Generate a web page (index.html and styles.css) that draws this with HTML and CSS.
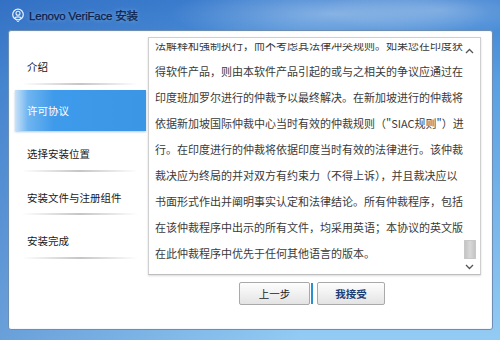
FILE: index.html
```html
<!DOCTYPE html>
<html lang="zh-CN">
<head>
<meta charset="utf-8">
<title>Lenovo VeriFace 安装</title>
<link rel="stylesheet" href="styles.css">
</head>
<body>
<div class="window">
  <div class="titlebar">
    <svg class="logo" width="12" height="14" viewBox="0 0 12 14">
      <circle cx="6" cy="6.5" r="5.3" fill="none" stroke="#e8f2ff" stroke-width="1.2"/>
      <circle cx="6" cy="5.2" r="2" fill="none" stroke="#e8f2ff" stroke-width="1.1"/>
      <path d="M2.6 10.4 C3.4 8.4 8.6 8.4 9.4 10.4" fill="none" stroke="#e8f2ff" stroke-width="1.1"/>
      <path d="M4.5 12.6 L6 13.8 L7.5 12.6" fill="none" stroke="#e8f2ff" stroke-width="0.9"/>
    </svg>
    <span class="title">Lenovo VeriFace 安装</span>
  </div>
  <div class="panel">
    <ul class="nav">
      <li class="nav-item">介绍</li>
      <li class="nav-item active">许可协议</li>
      <li class="nav-item">选择安装位置</li>
      <li class="nav-item">安装文件与注册组件</li>
      <li class="nav-item">安装完成</li>
    </ul>
    <div class="main">
      <div class="license">
        <div class="scroll">
          <div class="text">
            <div class="line">法解释和强制执行，而不考虑其法律冲突规则。如果您在印度获</div>
            <div class="line">得软件产品，则由本软件产品引起的或与之相关的争议应通过在</div>
            <div class="line">印度班加罗尔进行的仲裁予以最终解决。在新加坡进行的仲裁将</div>
            <div class="line">依据新加坡国际仲裁中心当时有效的仲裁规则（"SIAC规则"）进</div>
            <div class="line">行。在印度进行的仲裁将依据印度当时有效的法律进行。该仲裁</div>
            <div class="line">裁决应为终局的并对双方有约束力（不得上诉），并且裁决应以</div>
            <div class="line">书面形式作出并阐明事实认定和法律结论。所有仲裁程序，包括</div>
            <div class="line">在该仲裁程序中出示的所有文件，均采用英语；本协议的英文版</div>
            <div class="line">在此仲裁程序中优先于任何其他语言的版本。</div>
          </div>
          <div class="scrollbar">
            <svg class="arrow" width="9" height="6" viewBox="0 0 9 6"><path d="M1 5 L4.5 1.5 L8 5" fill="none" stroke="#555" stroke-width="1.3"/></svg>
            <div class="track"><div class="thumb"></div></div>
            <svg class="arrow" width="9" height="6" viewBox="0 0 9 6"><path d="M1 1 L4.5 4.5 L8 1" fill="none" stroke="#555" stroke-width="1.3"/></svg>
          </div>
        </div>
      </div>
      <div class="buttons">
        <button class="btn">上一步</button>
        <span class="focus-bar"></span>
        <button class="btn accept">我接受</button>
      </div>
    </div>
  </div>
</div>
</body>
</html>
```
FILE: styles.css
```css
html, body {
  margin: 0;
  padding: 0;
}
body {
  width: 500px;
  height: 340px;
  overflow: hidden;
  font-family: "Noto Sans CJK SC", "Liberation Sans", sans-serif;
}
.window {
  width: 500px;
  height: 340px;
  box-sizing: border-box;
  background:
    radial-gradient(ellipse 160px 30px at 330px 14px, rgba(255,255,255,0.35), rgba(255,255,255,0) 100%),
    radial-gradient(ellipse 120px 25px at 440px 10px, rgba(255,255,255,0.25), rgba(255,255,255,0) 100%),
    linear-gradient(90deg, rgba(30,80,170,0.35) 0, rgba(30,80,170,0) 60%),
    linear-gradient(180deg, #3f82d2 0, #5aa0e2 25%, #7db9ec 70%, #93cbf3 100%);
  padding: 0 7px 10px 8px;
  display: flex;
  flex-direction: column;
}
.titlebar {
  height: 30px;
  display: flex;
  align-items: center;
  padding-left: 4px;
  gap: 5px;
}
.logo {
  display: block;
  margin-top: -1px;
}
.title {
  font-family: "Liberation Sans", "Noto Sans CJK SC", sans-serif;
  font-size: 11.5px;
  color: #0c1f4c;
  letter-spacing: -0.2px;
  -webkit-text-stroke: 0.25px #0c1f4c;
  text-shadow: 0 0 4px rgba(255,255,255,0.45);
}
.panel {
  flex: 1;
  background: #fff;
  border: 1px solid #6d8db2;
  border-radius: 3px;
  display: flex;
  box-shadow: inset 0 0 0 1px #f4f8fc;
}
.nav {
  list-style: none;
  margin: 0;
  padding: 14px 2px 0 6px;
  width: 131px;
  flex: none;
}
.nav-item {
  position: relative;
  height: 43.5px;
  line-height: 43.5px;
  padding-left: 12px;
  font-size: 10.5px;
  color: #1a1a1a;
}
.nav-item::after {
  content: "";
  position: absolute;
  left: 7px;
  right: 8px;
  bottom: 4px;
  height: 2px;
  background: linear-gradient(90deg, rgba(150,150,150,0) 0, rgba(150,150,150,0.55) 50%, rgba(150,150,150,0) 100%);
}
.nav-item.active {
  color: #fff;
  height: 41px;
  line-height: 41px;
  margin: 1px 0 1.5px;
  background: linear-gradient(90deg, #c9e2f8 0, #6eb4f0 10%, #3e9aea 30%, #3c96e6 100%);
  box-shadow: 0 1px 2px rgba(60,120,190,0.4);
}
.nav-item.active::after {
  display: none;
}
.main {
  flex: 1;
  display: flex;
  flex-direction: column;
  padding-top: 6px;
}
.license {
  width: 333px;
  height: 238px;
  border: 1px solid #cfcfcf;
  border-bottom-color: #bdbdbd;
  box-shadow: 0 1px 2px rgba(0,0,0,0.15);
  box-sizing: border-box;
  padding: 5px 0 4px 6px;
}
.scroll {
  height: 100%;
  display: flex;
  overflow: hidden;
}
.text {
  flex: 1;
  margin-top: -11px;
  font-size: 11px;
  line-height: 26px;
  color: #3a3a3a;
  white-space: nowrap;
}
.scrollbar {
  width: 14px;
  margin-right: 5px;
  display: flex;
  flex-direction: column;
  align-items: center;
  padding-top: 5px;
}
.arrow {
  display: block;
}
.track {
  flex: 1;
  width: 12px;
  display: flex;
  flex-direction: column;
  justify-content: flex-end;
  padding-bottom: 5px;
}
.thumb {
  height: 17px;
  background: linear-gradient(90deg, #c4c4c4, #d8d8d8 50%, #c4c4c4);
  border: 1px solid #c8c8c8;
}
.buttons {
  display: flex;
  align-items: center;
  padding: 7px 0 0 91px;
}
.btn {
  height: 23px;
  width: 71px;
  border: 1px solid #a9a9a9;
  border-radius: 2px;
  background: linear-gradient(180deg, #fdfdfd 0, #f1f1f1 50%, #e3e3e3 100%);
  font-family: "Noto Sans CJK SC", sans-serif;
  font-size: 10.5px;
  color: #222;
  padding: 0;
}
.btn.accept {
  width: 68px;
  color: #1c3c74;
  font-weight: bold;
}
.focus-bar {
  width: 2px;
  height: 21px;
  background: #2b8fd6;
  margin: 0 4px 0 1px;
}
```
